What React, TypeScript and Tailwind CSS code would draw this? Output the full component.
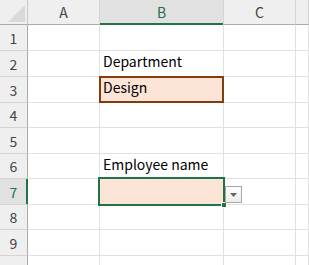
const rowHeights = ["h-[26px]", "h-[26px]", "h-[26px]", "h-[25px]", "h-[26px]", "h-[25px]", "h-[26px]", "h-[25px]", "h-[26px]", "h-[26px]"];
const cols = ["A", "B", "C", ""];

function Corner() {
  return (
    <div className="relative h-[25px] border-r border-b border-r-[#c8c8c8] border-b-[#ababab] bg-[#efefef]">
      <svg className="absolute left-[8px] top-[5px]" width="17" height="17" viewBox="0 0 17 17">
        <polygon points="17,0 17,17 0,17" fill="#d9d9d9" />
      </svg>
    </div>
  );
}

function ColHeader({ label }: { label: string }) {
  const active = label === "B";
  return (
    <div
      className={`relative flex h-[25px] items-center justify-center border-r border-b border-r-[#d4d4d4] border-b-[#ababab] text-[14px] leading-[24px] ${
        active ? "bg-[#e1e1e1] text-[#217346]" : "bg-[#efefef] text-[#444]"
      }`}
    >
      {label}
      {active && <div className="absolute left-0 right-0 -bottom-px h-[2px] bg-[#217346]" />}
    </div>
  );
}

function RowHeader({ n, h }: { n: number; h: string }) {
  const active = n === 7;
  return (
    <div
      className={`relative flex ${h} items-center justify-center border-r border-b border-r-[#ababab] border-b-[#d4d4d4] text-[14px] leading-[20px] ${
        active ? "bg-[#e1e1e1] text-[#217346]" : "bg-[#efefef] text-[#444]"
      }`}
    >
      {n}
      {active && <div className="absolute top-0 bottom-0 -right-px w-[2px] bg-[#217346]" />}
    </div>
  );
}

function Cell({ row, col, h }: { row: number; col: string; h: string }) {
  let content: React.ReactNode = null;
  let fill = "bg-white";
  if (col === "B" && row === 2) content = "Department";
  if (col === "B" && row === 6) content = "Employee name";
  if (col === "B" && row === 3) {
    content = "Design";
    fill = "bg-[#fce4d6]";
  }
  if (col === "B" && row === 7) fill = "bg-[#fce4d6]";

  return (
    <div className={`relative ${h} ${fill} border-r border-b border-[#e1e1e1] pl-[3px] text-[14px] leading-[20px] text-black whitespace-nowrap`}>
      {content}
      {col === "B" && row === 3 && (
        <div className="absolute -left-px -top-px -right-px -bottom-px border-2 border-[#843c0c]" />
      )}
      {col === "B" && row === 7 && (
        <>
          <div className="absolute -left-[2px] -top-[2px] -right-[2px] -bottom-[2px] z-10 border-2 border-[#217346]" />
          <div className="absolute -right-[4px] -bottom-[4px] z-20 h-[6px] w-[6px] border border-white bg-[#217346]" />
          <div className="absolute left-[125px] top-[7px] z-20 flex h-[17px] w-[17px] items-center justify-center border border-[#a6a6a6] bg-gradient-to-b from-white to-[#ececec]">
            <svg width="7" height="4" viewBox="0 0 7 4">
              <polygon points="0,0 7,0 3.5,4" fill="#666" />
            </svg>
          </div>
        </>
      )}
    </div>
  );
}

export default function App() {
  return (
    <div className="h-[265px] w-[309px] overflow-hidden bg-white" style={{ fontFamily: '"Noto Sans CJK JP", "Noto Sans", sans-serif' }}>
      <div className="grid grid-cols-[28px_72px_124px_72px_1fr]">
        <Corner />
        {cols.map((c, i) => (
          <ColHeader key={i} label={c} />
        ))}
        {rowHeights.map((h, i) => (
          <div key={i} className="contents">
            <RowHeader n={i + 1} h={h} />
            {cols.map((c, j) => (
              <Cell key={j} row={i + 1} col={c} h={h} />
            ))}
          </div>
        ))}
      </div>
    </div>
  );
}
